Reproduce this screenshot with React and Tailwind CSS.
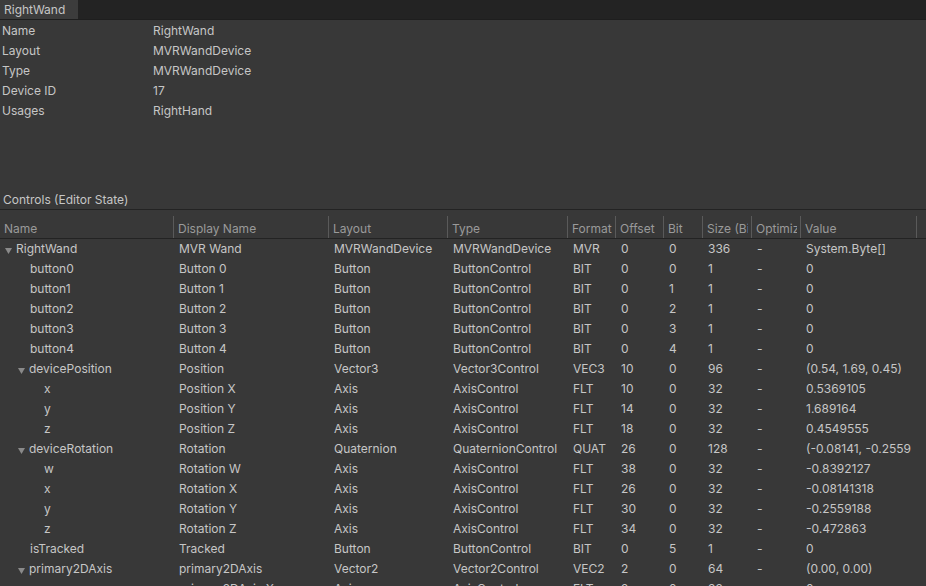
import React from "react";

const info = [
  ["Name", "RightWand"],
  ["Layout", "MVRWandDevice"],
  ["Type", "MVRWandDevice"],
  ["Device ID", "17"],
  ["Usages", "RightHand"],
];

const cols = [
  { label: "Name", w: "w-[173px]" },
  { label: "Display Name", w: "w-[155px]" },
  { label: "Layout", w: "w-[119px]" },
  { label: "Type", w: "w-[120px]" },
  { label: "Format", w: "w-[48px]" },
  { label: "Offset", w: "w-[48px]" },
  { label: "Bit", w: "w-[39px]" },
  { label: "Size (Bits)", w: "w-[49px]" },
  { label: "Optimized", w: "w-[49px]" },
  { label: "Value", w: "w-[116px]" },
];

// [depth, expandable, name, display, layout, type, format, offset, bit, size, opt, value]
const rows = [
  [0, true, "RightWand", "MVR Wand", "MVRWandDevice", "MVRWandDevice", "MVR", "0", "0", "336", "-", "System.Byte[]"],
  [1, false, "button0", "Button 0", "Button", "ButtonControl", "BIT", "0", "0", "1", "-", "0"],
  [1, false, "button1", "Button 1", "Button", "ButtonControl", "BIT", "0", "1", "1", "-", "0"],
  [1, false, "button2", "Button 2", "Button", "ButtonControl", "BIT", "0", "2", "1", "-", "0"],
  [1, false, "button3", "Button 3", "Button", "ButtonControl", "BIT", "0", "3", "1", "-", "0"],
  [1, false, "button4", "Button 4", "Button", "ButtonControl", "BIT", "0", "4", "1", "-", "0"],
  [1, true, "devicePosition", "Position", "Vector3", "Vector3Control", "VEC3", "10", "0", "96", "-", "(0.54, 1.69, 0.45)"],
  [2, false, "x", "Position X", "Axis", "AxisControl", "FLT", "10", "0", "32", "-", "0.5369105"],
  [2, false, "y", "Position Y", "Axis", "AxisControl", "FLT", "14", "0", "32", "-", "1.689164"],
  [2, false, "z", "Position Z", "Axis", "AxisControl", "FLT", "18", "0", "32", "-", "0.4549555"],
  [1, true, "deviceRotation", "Rotation", "Quaternion", "QuaternionControl", "QUAT", "26", "0", "128", "-", "(-0.08141, -0.2559"],
  [2, false, "w", "Rotation W", "Axis", "AxisControl", "FLT", "38", "0", "32", "-", "-0.8392127"],
  [2, false, "x", "Rotation X", "Axis", "AxisControl", "FLT", "26", "0", "32", "-", "-0.08141318"],
  [2, false, "y", "Rotation Y", "Axis", "AxisControl", "FLT", "30", "0", "32", "-", "-0.2559188"],
  [2, false, "z", "Rotation Z", "Axis", "AxisControl", "FLT", "34", "0", "32", "-", "-0.472863"],
  [1, false, "isTracked", "Tracked", "Button", "ButtonControl", "BIT", "0", "5", "1", "-", "0"],
  [1, true, "primary2DAxis", "primary2DAxis", "Vector2", "Vector2Control", "VEC2", "2", "0", "64", "-", "(0.00, 0.00)"],
  [2, false, "x", "primary2DAxis X", "Axis", "AxisControl", "FLT", "2", "0", "32", "-", "0"],
];

const pad = ["pl-[16px]", "pl-[30px]", "pl-[44px]"];
const triPad = ["pl-[5px]", "pl-[18px]", "pl-[32px]"];

function Tri() {
  return (
    <svg width="7" height="6" viewBox="0 0 7 6" className="mr-[4px] mt-[3px] shrink-0">
      <path d="M0 0 H7 L3.5 6 Z" fill="#8a8a8a" />
    </svg>
  );
}

export default function App() {
  return (
    <div
      className="w-[926px] h-[586px] overflow-hidden bg-[#383838] text-[12px] text-[#c6c6c6] leading-[20px] flex flex-col"
      style={{ fontFamily: "Inter, 'Noto Sans', sans-serif" }}
    >
      {/* Tab bar */}
      <div className="h-[20px] bg-[#232323] flex shrink-0 border-b border-[#1e1e1e]">
        <div className="w-[78px] bg-[#3c3c3c] px-[4px] leading-[19px]">RightWand</div>
      </div>

      {/* Info */}
      <div className="h-[169px] shrink-0 flex flex-col pt-[1px]">
        {info.map(([k, v]) => (
          <div key={k} className="flex h-[20px]">
            <div className="w-[153px] pl-[2px]">{k}</div>
            <div>{v}</div>
          </div>
        ))}
      </div>

      {/* Controls header */}
      <div className="h-[21px] shrink-0 border-b border-[#232323] pl-[3px] leading-[21px]">
        Controls (Editor State)
      </div>

      {/* Table header */}
      <div className="h-[29px] shrink-0 flex border-b border-[#232323] text-[#9a9a9a]">
        {cols.map((c, i) => (
          <div
            key={c.label}
            className={`${c.w} shrink-0 h-[22px] mt-[6px] pl-[4px] pr-[3px] overflow-hidden whitespace-nowrap ${i === 0 ? "" : "border-l border-[#5a5a5a]"}`}
          >
            <div className="overflow-hidden leading-[26px]">{c.label}</div>
          </div>
        ))}
        <div className="border-l border-[#5a5a5a] h-[22px] mt-[6px]" />
      </div>

      {/* Rows */}
      <div className="flex flex-col">
        {rows.map((r, idx) => {
          const [depth, exp, ...cells] = r;
          return (
            <div key={idx} className="flex h-[20px] shrink-0 whitespace-nowrap">
              {cells.map((cell, i) => {
                if (i === 0) {
                  return (
                    <div
                      key={i}
                      className={`w-[173px] shrink-0 flex items-center ${exp ? triPad[depth] : pad[depth]}`}
                    >
                      {exp && <Tri />}
                      <span>{cell}</span>
                    </div>
                  );
                }
                return (
                  <div key={i} className={`${cols[i].w} shrink-0 pl-[6px] overflow-hidden`}>
                    {cell}
                  </div>
                );
              })}
            </div>
          );
        })}
      </div>
    </div>
  );
}
